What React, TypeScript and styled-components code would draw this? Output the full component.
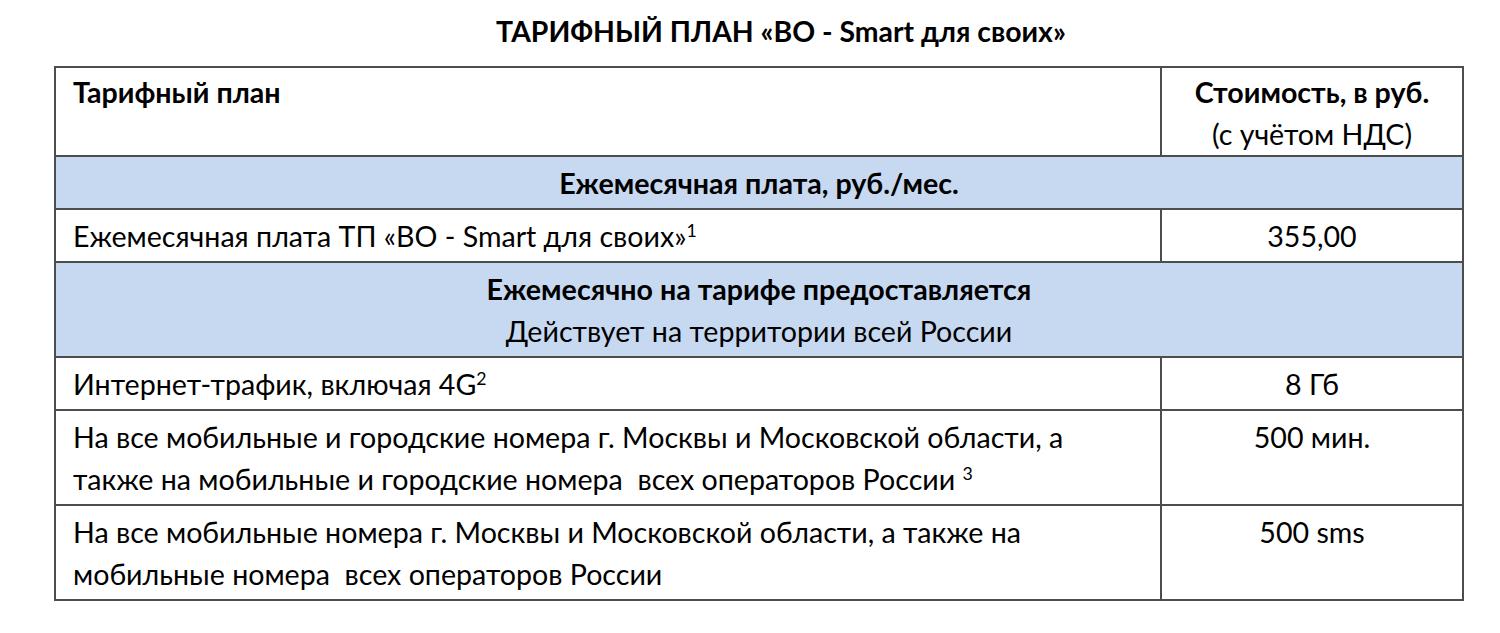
import React from 'react';
import styled, { createGlobalStyle } from 'styled-components';

const GlobalStyle = createGlobalStyle`
  html, body {
    margin: 0;
    padding: 0;
    background: #ffffff;
  }
  body {
    font-family: 'Lato', 'Liberation Sans', sans-serif;
    color: #000000;
  }
`;

const Page = styled.div`
  width: 1408px;
  margin-left: 54px;
  padding-top: 10px;
`;

const Title = styled.h1`
  margin: 0 0 14px;
  padding-left: 46px;
  font-size: 28.4px;
  line-height: 42px;
  font-weight: 700;
  text-align: center;
`;

const Table = styled.table`
  width: 1408px;
  border-collapse: collapse;
  table-layout: fixed;
  font-size: 28.6px;
  line-height: 42px;
`;

const Cell = styled.td<{ $align?: 'left' | 'center'; $bold?: boolean; $band?: boolean; $tight?: boolean }>`
  border: 2px solid #4d4d4d;
  padding: ${(p) => (p.$tight ? '3px 17px 0' : '5px 17px 4px')};
  vertical-align: top;
  text-align: ${(p) => p.$align || 'left'};
  font-weight: ${(p) => (p.$bold ? 700 : 400)};
  background: ${(p) => (p.$band ? '#c6d9f1' : 'transparent')};
`;

const Line = styled.div<{ $bold?: boolean }>`
  font-weight: ${(p) => (p.$bold ? 700 : 400)};
`;

const Sup = styled.sup`
  font-size: 0.62em;
  line-height: 0;
  vertical-align: 0.55em;
`;

const App = () => {
  return (
    <>
      <GlobalStyle />
      <Page>
        <Title>ТАРИФНЫЙ ПЛАН «ВО - Smart для своих»</Title>
        <Table>
          <colgroup>
            <col style={{ width: 1106 }} />
            <col style={{ width: 302 }} />
          </colgroup>
          <tbody>
            <tr>
              <Cell $bold $tight>Тарифный план</Cell>
              <Cell $align='center' $tight>
                <Line $bold>Стоимость, в руб.</Line>
                <Line>(с учётом НДС)</Line>
              </Cell>
            </tr>
            <tr>
              <Cell colSpan={2} $align='center' $bold $band>
                Ежемесячная плата, руб./мес.
              </Cell>
            </tr>
            <tr>
              <Cell>
                Ежемесячная плата ТП «ВО - Smart для своих»<Sup>1</Sup>
              </Cell>
              <Cell $align='center'>355,00</Cell>
            </tr>
            <tr>
              <Cell colSpan={2} $align='center' $band>
                <Line $bold>Ежемесячно на тарифе предоставляется</Line>
                <Line>Действует на территории всей России</Line>
              </Cell>
            </tr>
            <tr>
              <Cell>
                Интернет-трафик, включая 4G<Sup>2</Sup>
              </Cell>
              <Cell $align='center'>8 Гб</Cell>
            </tr>
            <tr>
              <Cell>
                На все мобильные и городские номера г. Москвы и Московской области, а
                <br />
                также на мобильные и городские номера&nbsp; всех операторов России <Sup>3</Sup>
              </Cell>
              <Cell $align='center'>500 мин.</Cell>
            </tr>
            <tr>
              <Cell>
                На все мобильные номера г. Москвы и Московской области, а также на
                <br />
                мобильные номера&nbsp; всех операторов России
              </Cell>
              <Cell $align='center'>500 sms</Cell>
            </tr>
          </tbody>
        </Table>
      </Page>
    </>
  );
};

export default App;
